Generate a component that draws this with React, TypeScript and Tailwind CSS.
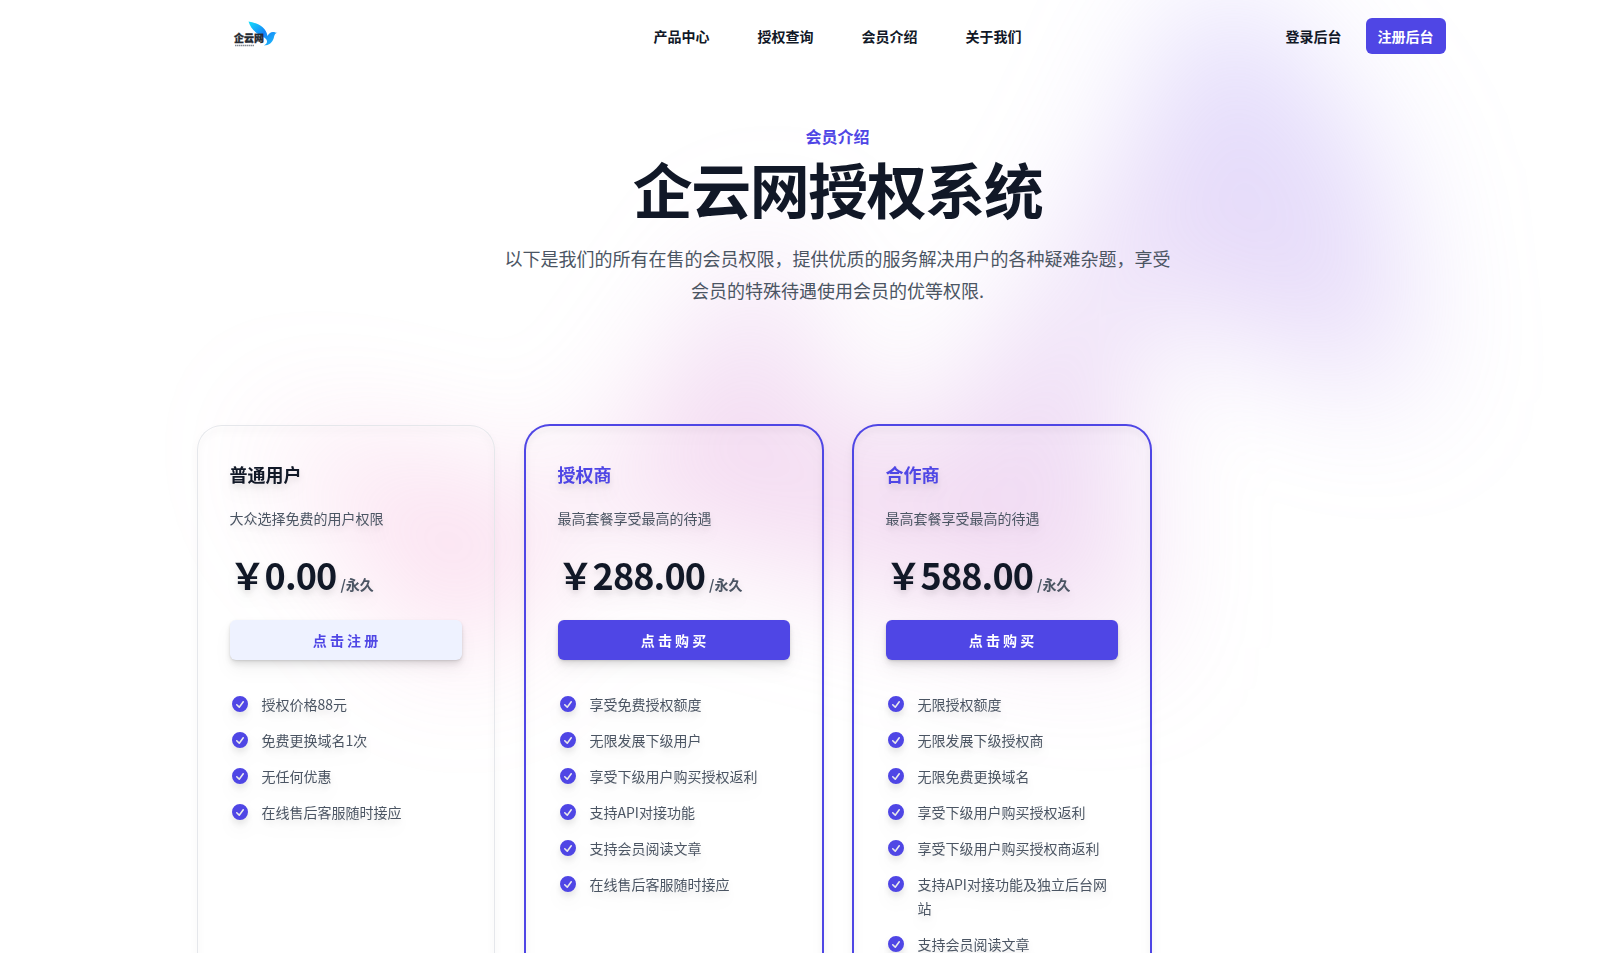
import React from 'react';

interface Plan {
  id: string;
  name: string;
  description: string;
  price: string;
  action: string;
  featured: boolean;
  features: string[];
}

const navigation = [
  { name: '产品中心', href: '#products' },
  { name: '授权查询', href: '#query' },
  { name: '会员介绍', href: '#pricing' },
  { name: '关于我们', href: '#about' },
];

const plans: Plan[] = [
  {
    id: 'user',
    name: '普通用户',
    description: '大众选择免费的用户权限',
    price: '￥0.00',
    action: '点 击 注 册',
    featured: false,
    features: ['授权价格88元', '免费更换域名1次', '无任何优惠', '在线售后客服随时接应'],
  },
  {
    id: 'agent',
    name: '授权商',
    description: '最高套餐享受最高的待遇',
    price: '￥288.00',
    action: '点 击 购 买',
    featured: true,
    features: [
      '享受免费授权额度',
      '无限发展下级用户',
      '享受下级用户购买授权返利',
      '支持API对接功能',
      '支持会员阅读文章',
      '在线售后客服随时接应',
    ],
  },
  {
    id: 'partner',
    name: '合作商',
    description: '最高套餐享受最高的待遇',
    price: '￥588.00',
    action: '点 击 购 买',
    featured: true,
    features: [
      '无限授权额度',
      '无限发展下级授权商',
      '无限免费更换域名',
      '享受下级用户购买授权返利',
      '享受下级用户购买授权商返利',
      '支持API对接功能及独立后台网站',
      '支持会员阅读文章',
    ],
  },
];

const Logo: React.FC = () => (
  <svg viewBox="0 0 48 48" className="size-12" role="img" aria-label="企云网">
    <defs>
      <linearGradient id="wing" x1="0" y1="0" x2="1" y2="1">
        <stop offset="0" stopColor="#16e0fa" />
        <stop offset="0.5" stopColor="#1583f7" />
        <stop offset="1" stopColor="#1fc4fb" />
      </linearGradient>
    </defs>
    <path
      d="M18.500 9.500c8 1.500 17.500 5 19 14.500 1-2.300 3-4 5.500-4 1.500 0 2 .7 4.500.8-3 .8-3 2.700-3.700 5.200-1.300 4.500-4.800 7.500-9.800 7.500 3-1.500 4-4 2-6.500-1.500-2-4.500-2.500-8-5-5-3.500-8-7.500-9.500-12.500z"
      fill="url(#wing)"
    />
    <text x="4" y="30" fontSize="10" fontWeight="900" fill="#262b33" stroke="#262b33" strokeWidth=".3">
      企云网
    </text>
    <path d="M5 33.500h19" stroke="#4b5563" strokeWidth="1.500" strokeDasharray="1.500 .5" opacity=".7" />
  </svg>
);

const CheckIcon: React.FC = () => (
  <svg viewBox="0 0 20 20" fill="currentColor" className="h-6 w-5 flex-none text-[#4f46e5]" aria-hidden="true">
    <path
      fillRule="evenodd"
      clipRule="evenodd"
      d="M10 18a8 8 0 1 0 0-16 8 8 0 0 0 0 16zm3.857-9.809a.75.75 0 0 0-1.214-.882l-3.483 4.79-1.88-1.88a.75.75 0 1 0-1.06 1.061l2.5 2.5a.75.75 0 0 0 1.137-.089l4-5.5z"
    />
  </svg>
);

const Header: React.FC = () => (
  <header className="mx-auto flex max-w-7xl items-center justify-between px-8 py-3">
    <div className="flex flex-1">
      <a href="#home">
        <Logo />
      </a>
    </div>
    <nav className="flex gap-x-12">
      {navigation.map((item) => (
        <a key={item.name} href={item.href} className="text-sm leading-6 font-semibold text-[#111827]">
          {item.name}
        </a>
      ))}
    </nav>
    <div className="flex flex-1 items-center justify-end gap-x-6">
      <a href="#login" className="text-sm leading-6 font-semibold text-[#111827]">
        登录后台
      </a>
      <a href="#register" className="rounded-md bg-[#4f46e5] px-3 py-2 text-sm leading-5 font-semibold text-white">
        注册后台
      </a>
    </div>
  </header>
);

const PlanCard: React.FC<{ plan: Plan }> = ({ plan }) => (
  <article
    className={`rounded-3xl p-8 [filter:drop-shadow(0_10px_8px_rgb(0_0_0/0.04))_drop-shadow(0_4px_3px_rgb(0_0_0/0.1))] ${
      plan.featured ? 'ring-2 ring-[#4f46e5]' : 'ring-1 ring-[#e5e7eb]'
    }`}
  >
    <h3 className={`text-lg leading-8 font-semibold ${plan.featured ? 'text-[#4f46e5]' : 'text-[#111827]'}`}>
      {plan.name}
    </h3>
    <p className="mt-4 text-sm leading-6 text-[#4b5563]">{plan.description}</p>
    <p className="mt-6 flex items-baseline gap-x-1">
      <span className="text-4xl font-bold tracking-tight text-[#111827]">{plan.price}</span>
      <span className="text-sm leading-6 font-semibold text-[#4b5563]">/永久</span>
    </p>
    <button
      type="button"
      className={`mt-6 block w-full rounded-md px-3 py-2 text-center text-sm leading-6 font-semibold shadow-sm ${
        plan.featured ? 'bg-[#4f46e5] text-white' : 'bg-[#eef2ff] text-[#4f46e5]'
      }`}
    >
      {plan.action}
    </button>
    <ul className="mt-8 space-y-3 text-sm leading-6 text-[#4b5563]">
      {plan.features.map((feature) => (
        <li key={feature} className="flex gap-x-3">
          <CheckIcon />
          {feature}
        </li>
      ))}
    </ul>
  </article>
);

export default function App() {
  return (
    <div className="relative isolate overflow-hidden bg-white pb-24 pl-[73px] font-['Noto_Sans_CJK_SC',sans-serif]">
      {/* blurred gradient behind the whole page */}
      <div className="absolute -top-3 right-0 left-[73px] -z-10 overflow-hidden px-36 blur-[64px]" aria-hidden="true">
        <div className="mx-auto aspect-[1155/678] w-[1155px] bg-[linear-gradient(to_top_right,#ff80b5,#9089fc)] opacity-30 [clip-path:polygon(74.1%_44.1%,100%_61.6%,97.5%_26.9%,85.5%_0.1%,80.7%_2%,72.5%_32.5%,60.2%_62.4%,52.4%_68.1%,47.5%_58.3%,45.2%_34.5%,27.5%_76.7%,0.1%_64.9%,17.9%_100%,27.6%_76.8%,76.1%_97.7%,74.1%_44.1%)]" />
      </div>
      <Header />
      <main className="mx-auto max-w-7xl pt-[50px]">
        <div className="text-center">
          <h2 className="text-base leading-7 font-semibold text-[#4f46e5]">会员介绍</h2>
          <h1 className="mt-2 text-6xl font-bold tracking-tight text-[#111827]">企云网授权系统</h1>
          <p className="mx-auto mt-6 max-w-2xl text-lg leading-8 text-[#4b5563]">
            以下是我们的所有在售的会员权限，提供优质的服务解决用户的各种疑难杂题，享受会员的特殊待遇使用会员的优等权限.
          </p>
        </div>
        <div className="mt-[120px] grid grid-cols-4 gap-8">
          {plans.map((plan) => (
            <PlanCard key={plan.id} plan={plan} />
          ))}
        </div>
      </main>
    </div>
  );
}
